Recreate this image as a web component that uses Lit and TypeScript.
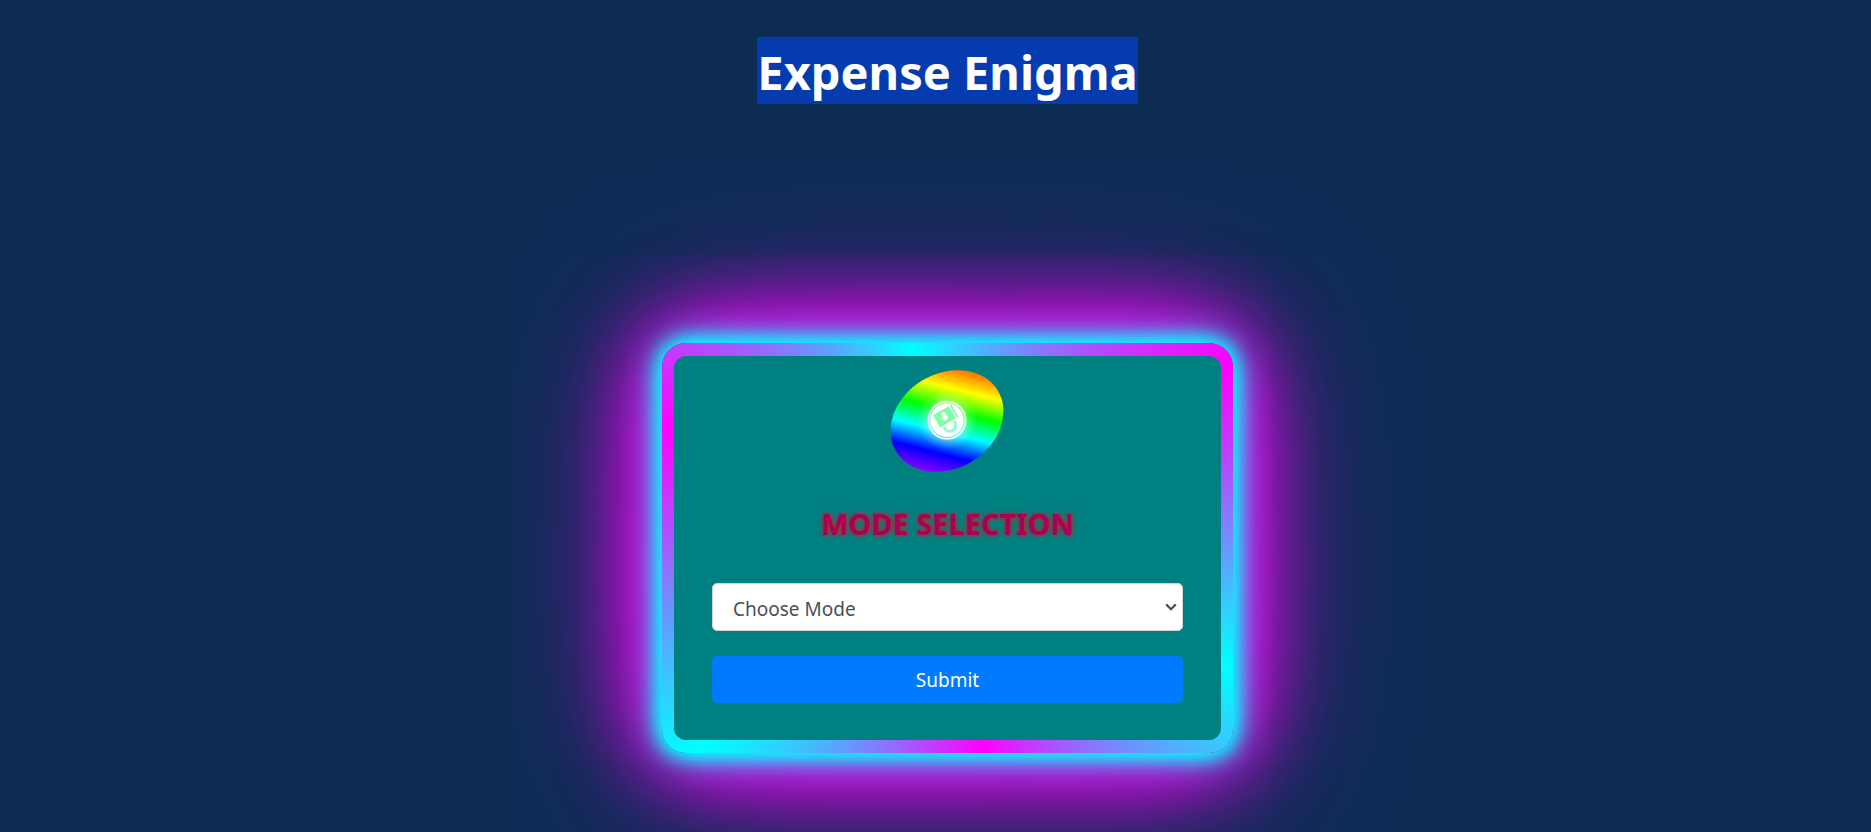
import { LitElement, html, css } from "lit";
import { customElement } from "lit/decorators.js";

@customElement("rainbow-badge")
export class RainbowBadge extends LitElement {
  static styles = css`
    :host {
      display: block;
      line-height: 0;
    }
  `;

  render() {
    return html`
      <svg width="120" height="104" viewBox="-59 -52 120 104" aria-hidden="true">
        <defs>
          <linearGradient
            id="rainbow"
            gradientUnits="userSpaceOnUse"
            x1="-13.3"
            y1="53.4"
            x2="13.3"
            y2="-53.4"
            gradientTransform="rotate(30.5)"
          >
            <stop offset="0" stop-color="#8f00ff" />
            <stop offset=".2" stop-color="#0000ff" />
            <stop offset=".4" stop-color="#00ffff" />
            <stop offset=".6" stop-color="#00ff00" />
            <stop offset=".8" stop-color="#ffff00" />
            <stop offset="1" stop-color="#ff6600" />
          </linearGradient>
          <radialGradient id="halo">
            <stop offset=".5" stop-color="#fff" stop-opacity=".6" />
            <stop offset=".72" stop-color="#fff" stop-opacity=".2" />
            <stop offset="1" stop-color="#fff" stop-opacity="0" />
          </radialGradient>
        </defs>
        <ellipse rx="59.3" ry="47.5" transform="rotate(-30.5)" fill="url(#rainbow)" />
        <g transform="translate(0 -.8)">
          <circle r="30" fill="url(#halo)" />
          <circle r="18.6" fill="none" stroke="#fff" stroke-width="1.6" />
          <circle r="16.6" fill="#fff" />
          <g transform="rotate(-30)">
            <rect x="-9.5" y="-11.3" width="18" height="14" fill="#7dffa6" />
            <rect x="9.8" y="-11.3" width="1.8" height="14" fill="#7dffb4" />
            <path d="M-6 4.4v1.6a5.8 5.8 0 0 0 11.6 0v-1.6" fill="none" stroke="#8fffd2" stroke-width="3" />
          </g>
          <circle cx="-3.4" cy="-6" r="2.2" fill="#fff" />
          <circle cx="-2" cy="-2.4" r="2.8" fill="#fff" />
        </g>
      </svg>
    `;
  }
}

@customElement("app-root")
export class AppRoot extends LitElement {
  static styles = css`
    :host {
      display: block;
      min-height: 100vh;
      overflow: hidden;
      box-sizing: border-box;
      background: #0c2c54;
      font-family: "Segoe UI", "Noto Sans", "Open Sans", sans-serif;
      padding: 37px 0 79px 24px;
    }
    .page {
      display: flex;
      flex-direction: column;
      align-items: center;
      gap: 239px;
    }
    .title {
      margin: 0;
      padding-top: 4px;
      color: #fff;
      background: #043cb0;
      font-size: 47px;
      line-height: 63px;
      font-weight: 700;
    }
    .frame {
      box-sizing: border-box;
      width: 100%;
      max-width: 571px;
      padding: 13px 12px;
      border-radius: 24px;
      background: conic-gradient(
        from -10deg,
        #0ff,
        #f0f 67deg,
        #0ff 123deg,
        #f0f 180deg,
        #0ff 241deg,
        #f0f 303deg,
        #0ff
      );
      box-shadow:
        0 0 20px #0ff,
        0 0 25px #0ff,
        0 0 40px #0ff,
        0 0 80px #f0f,
        0 0 100px #f0f,
        0 0 160px #f0f;
    }
    .card {
      display: flex;
      flex-direction: column;
      align-items: center;
      padding: 13px 38px 37px;
      border-radius: 12px;
      background: #008080;
    }
    .heading {
      margin: 29px 0 37px;
      color: #a6005a;
      font-size: 29px;
      line-height: 44px;
      font-weight: 700;
      text-shadow: 0 0 5px #f00;
    }
    .form {
      display: flex;
      flex-direction: column;
      gap: 25px;
      width: 100%;
    }
    .mode,
    .submit {
      width: 100%;
      box-sizing: border-box;
      margin: 0;
      font-family: inherit;
      font-size: 19px;
      border-radius: 5px;
    }
    .mode {
      appearance: none;
      height: 48px;
      padding: 11px 32px 7px 20px;
      line-height: 28px;
      color: #495057;
      border: 1px solid #ced4da;
      background: #fff
        url("data:image/svg+xml,%3Csvg xmlns='http://www.w3.org/2000/svg' width='12' height='8' viewBox='0 0 12 8'%3E%3Cpath d='M1.2 1.4L6 6.2l4.8-4.8' fill='none' stroke='%23495057' stroke-width='2.2'/%3E%3C/svg%3E")
        no-repeat right 5px center;
    }
    .submit {
      height: 47px;
      padding: 8px 16px;
      line-height: 30px;
      color: #fff;
      background: #007bff;
      border: 0;
      cursor: pointer;
    }
  `;

  render() {
    return html`
      <main class="page">
        <h1 class="title">Expense Enigma</h1>
        <section class="frame">
          <div class="card">
            <rainbow-badge></rainbow-badge>
            <h2 class="heading">MODE SELECTION</h2>
            <form class="form" @submit=${(e: Event) => e.preventDefault()}>
              <select class="mode" aria-label="Mode">
                <option>Choose Mode</option>
              </select>
              <button class="submit" type="submit">Submit</button>
            </form>
          </div>
        </section>
      </main>
    `;
  }
}
